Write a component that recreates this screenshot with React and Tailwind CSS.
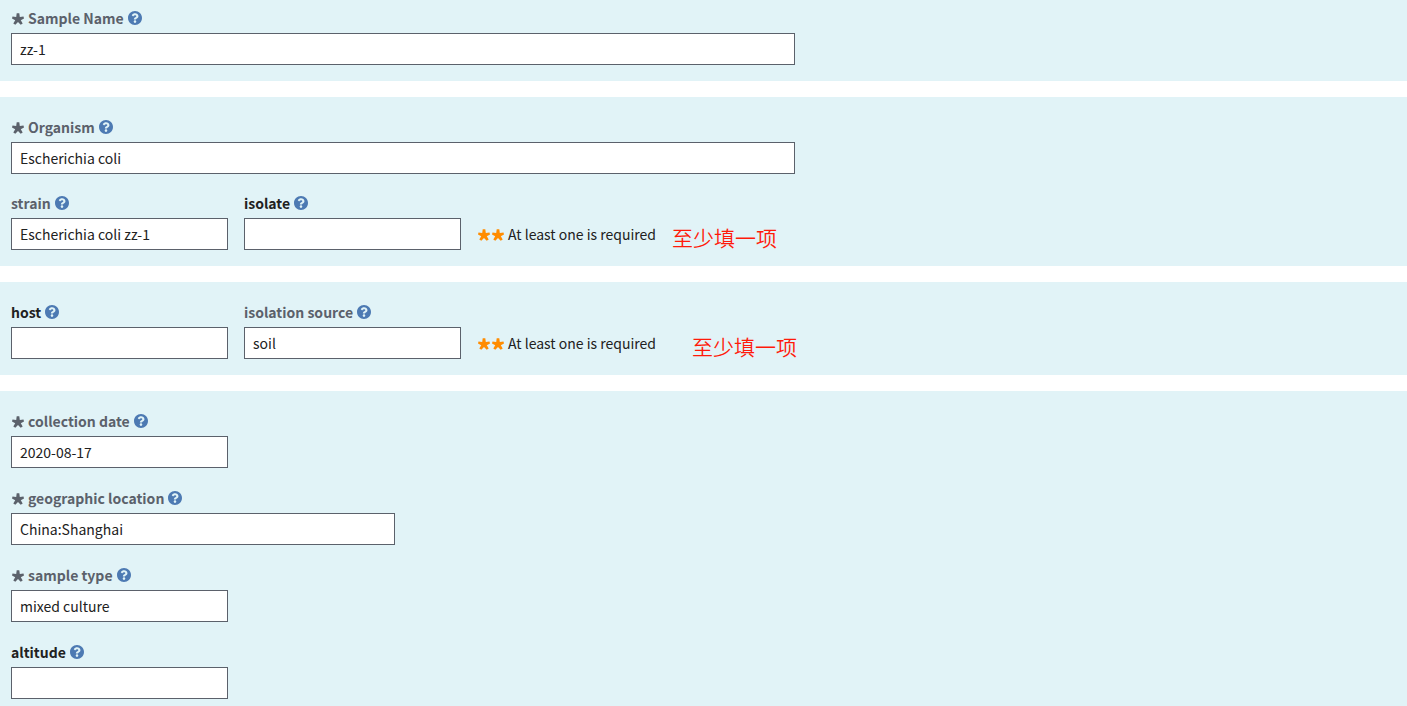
import React, { useState } from 'react';

const WIDTHS = {
  full: 'w-[784px] max-w-full',
  medium: 'w-96 max-w-full',
  small: 'w-[217px]',
};

function StarIcon({ className }) {
  return (
    <svg viewBox="0 0 14 14" className={`h-3.5 w-3.5 shrink-0 ${className}`} fill="currentColor" aria-hidden="true">
      <path d="M5.700 2.200h2.600l.5 3.700 3.700-.5.5 2-3.200 1.800 1.900 3.200-2 1.400L7 11.100l-2.700 2.700-2-1.400 1.900-3.200L1 7.400l.5-2 3.700.5z" />
    </svg>
  );
}

function HelpButton({ name }) {
  return (
    <button type="button" aria-label={`Help for ${name}`} className="ml-1 shrink-0 text-[#4d7ab3]">
      <svg viewBox="8 8 496 496" className="h-3.5 w-3.5" fill="currentColor" aria-hidden="true">
        <path d="M504 256c0 136.997-111.043 248-248 248S8 392.997 8 256C8 119.083 119.043 8 256 8s248 111.083 248 248zM262.655 90c-54.497 0-89.255 22.957-116.549 63.758-3.536 5.286-2.353 12.415 2.715 16.258l34.699 26.31c5.205 3.947 12.621 3.008 16.665-2.122 17.864-22.658 30.113-35.797 57.303-35.797 20.429 0 45.698 13.148 45.698 32.958 0 14.976-12.363 22.667-32.534 33.976C247.128 238.528 216 254.941 216 296v4c0 6.627 5.373 12 12 12h56c6.627 0 12-5.373 12-12v-1.333c0-28.462 83.186-29.647 83.186-106.667 0-58.002-60.165-102-116.531-102zM256 338c-25.365 0-46 20.635-46 46 0 25.364 20.635 46 46 46s46-20.636 46-46c0-25.364-20.635-46-46-46z" />
      </svg>
    </button>
  );
}

function Field({ id, label, initial = '', required, optional, size = 'small' }) {
  const [value, setValue] = useState(initial);

  return (
    <div className="min-w-0">
      <div className="flex h-7 items-center pb-0.5">
        {required && <StarIcon className="mr-[3px] text-[#5b616b]" />}
        <label htmlFor={id} className={`font-bold ${optional ? 'text-[#212121]' : 'text-[#5b616b]'}`}>
          {label}
        </label>
        <HelpButton name={label} />
      </div>
      <input
        id={id}
        type="text"
        value={value}
        onChange={(e) => setValue(e.target.value)}
        className={`block h-8 border border-[#5b616b] bg-white px-2 text-[#212121] ${WIDTHS[size]}`}
      />
    </div>
  );
}

// Shown next to a pair of fields where either one will do
function EitherHint({ children }) {
  return (
    <div className="flex h-8 items-center">
      <StarIcon className="text-[#ff8c00]" />
      <StarIcon className="mr-[3px] text-[#ff8c00]" />
      <span>At least one is required</span>
      {children}
    </div>
  );
}

function Section({ className = 'pt-[17px]', children }) {
  return <section className={`bg-[#e1f3f7] px-[11px] pb-4 ${className}`}>{children}</section>;
}

export default function App() {
  return (
    <form className="flex flex-col gap-4 font-['Noto_Sans_CJK_SC',sans-serif] text-[14px] leading-5 text-[#212121]">
      <Section className="pt-[5px]">
        <Field id="sample-name" label="Sample Name" initial="zz-1" required size="full" />
      </Section>

      <Section className="flex flex-col gap-4 pt-[17px]">
        <Field id="organism" label="Organism" initial="Escherichia coli" required size="full" />
        <div className="flex items-end gap-4">
          <Field id="strain" label="strain" initial="Escherichia coli zz-1" />
          <Field id="isolate" label="isolate" optional />
          <EitherHint>
            <span lang="zh" className="ml-4 pt-1.5 text-[21px] font-[350] text-[#ff1a0a]">至少填一项</span>
          </EitherHint>
        </div>
      </Section>

      <Section>
        <div className="flex items-end gap-4">
          <Field id="host" label="host" optional />
          <Field id="isolation-source" label="isolation source" initial="soil" />
          <EitherHint>
            <span lang="zh" className="ml-9 pt-1.5 text-[21px] font-[350] text-[#ff1a0a]">至少填一项</span>
          </EitherHint>
        </div>
      </Section>

      <Section className="flex flex-col gap-[17px] pt-[17px]">
        <Field id="collection-date" label="collection date" initial="2020-08-17" required />
        <Field id="geographic-location" label="geographic location" initial="China:Shanghai" required size="medium" />
        <Field id="sample-type" label="sample type" initial="mixed culture" required />
        <Field id="altitude" label="altitude" optional />
      </Section>
    </form>
  );
}
